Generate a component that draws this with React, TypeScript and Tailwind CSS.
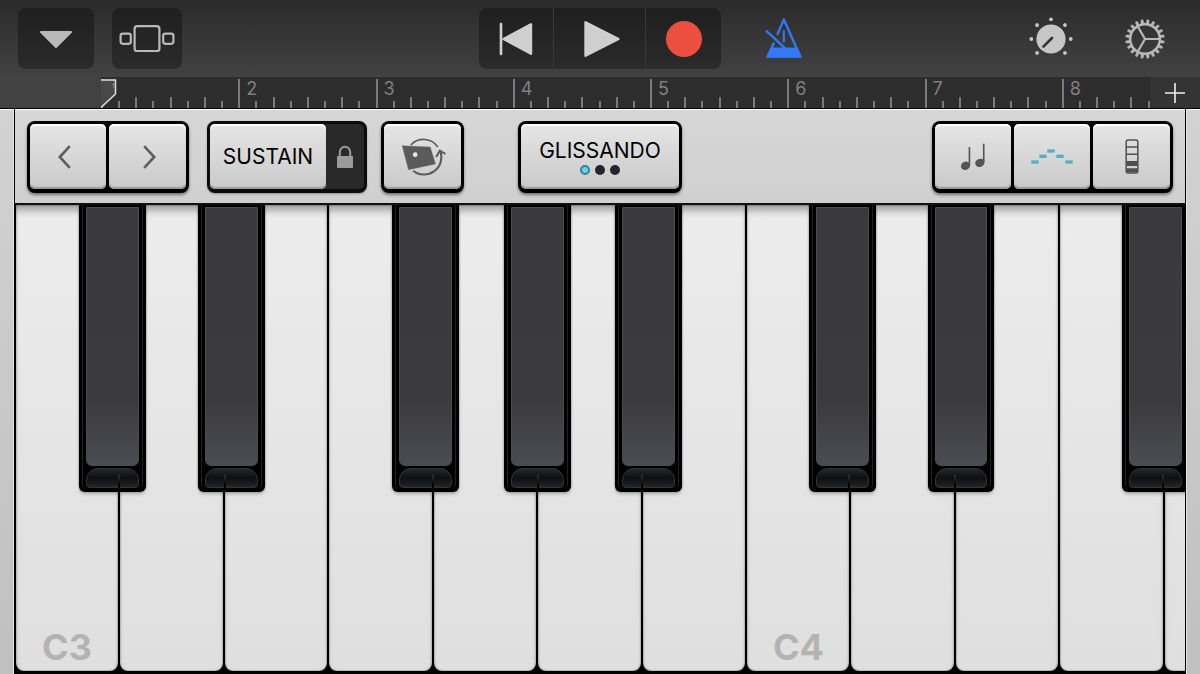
import type { ReactNode } from 'react';
import clsx from 'clsx';

const TICKS = Array.from({ length: 62 }, (_, i) => i);

const WHITE_KEYS = ['C3', 'D3', 'E3', 'F3', 'G3', 'A3', 'B3', 'C4', 'D4', 'E4', 'F4', 'G4'];

/* left edge in % of the keyboard width, split = where the gap of the white keys falls on the cap */
const BLACK_KEYS = [
  { note: 'C#3', left: 5.5, split: 61 },
  { note: 'D#3', left: 15.65, split: 35 },
  { note: 'F#3', left: 32.25, split: 63 },
  { note: 'G#3', left: 41.8, split: 49 },
  { note: 'A#3', left: 51.3, split: 36 },
  { note: 'C#4', left: 67.9, split: 61 },
  { note: 'D#4', left: 78, split: 36 },
  { note: 'F#4', left: 94.65, split: 62 },
];

const GEAR_TEETH = Array.from({ length: 20 }, (_, i) => i * 18 + 9);
const KNOB_DOTS = [-225, -180, -135, -90, -45, 0, 45];

/* ── icons ── */
function TracksIcon() {
  return (
    <svg width="56" height="28" viewBox="0 0 56 28" fill="none" stroke="#b9b9b9" strokeWidth="2.2">
      <rect x="1.6" y="8.6" width="10.2" height="10.2" rx="2.2" />
      <rect x="15.6" y="1.2" width="24.8" height="24.8" rx="2.6" />
      <rect x="44.2" y="8.6" width="10.2" height="10.2" rx="2.2" />
    </svg>
  );
}

function RewindIcon() {
  return (
    <svg width="34" height="34" viewBox="0 0 34 34" fill="#cfcfcf" stroke="#cfcfcf" strokeLinejoin="round" strokeLinecap="round">
      <path d="M2 2v30" strokeWidth="2.6" />
      <path d="M4.5 17 32 2.2v29.6z" strokeWidth="2.4" />
    </svg>
  );
}

function MetronomeIcon() {
  return (
    <svg width="38" height="41" viewBox="0 0 38 41" fill="none" stroke="#3478f6" strokeWidth="2.4" strokeLinecap="round" strokeLinejoin="round">
      <path d="M12.6 16 18.8 1.6 35.3 38.6H2.7L8.6 25.4" />
      <path d="M6.6 30.4h25.2l3.5 8.2H2.7z" fill="#3478f6" strokeWidth="2" />
      <path d="M18.8 13v10.5" strokeWidth="2.2" />
      <path d="M1.6 13.2 19.4 29.6" />
    </svg>
  );
}

function KnobIcon() {
  return (
    <svg width="44" height="44" viewBox="-22 -22 44 44">
      <circle r="14.6" fill="#c6c6c6" />
      <path d="M1 -1-7.6 7.6" stroke="#333" strokeWidth="2.6" strokeLinecap="round" />
      {KNOB_DOTS.map((deg) => (
        <circle key={deg} cx="19.7" r="1.9" fill="#c6c6c6" transform={`rotate(${deg})`} />
      ))}
    </svg>
  );
}

function GearIcon() {
  return (
    <svg width="42" height="42" viewBox="-21 -21 42 42" fill="none" stroke="#b9b9b9">
      <circle r="14.8" strokeWidth="2.4" />
      {GEAR_TEETH.map((deg) => (
        <path key={deg} d="M15.5-1.5 19.4-0.9V0.9L15.5 1.5z" fill="#b9b9b9" strokeWidth="0.5" transform={`rotate(${deg})`} />
      ))}
      <path d="M0 0H15M0 0-7.5-13M0 0-7.5 13" strokeWidth="2.2" />
    </svg>
  );
}

function ChevronIcon({ flip }: { flip?: boolean }) {
  return (
    <svg width="13" height="24" viewBox="0 0 13 24" fill="none" stroke="#5e5e5e" strokeWidth="2.6">
      <path d={flip ? 'M1.2 1.2 11.2 12 1.2 22.8' : 'M11.8 1.2 1.8 12l10 10.8'} />
    </svg>
  );
}

function LockIcon() {
  return (
    <svg width="18" height="24" viewBox="0 0 18 24" fill="none" stroke="#9b9b9b">
      <path d="M3.8 11V7.4a5.2 5.6 0 0 1 10.4 0V11" strokeWidth="2" />
      <rect x="1" y="11" width="16" height="12" rx="1" fill="#9b9b9b" stroke="none" />
    </svg>
  );
}

function TiltIcon() {
  return (
    <svg width="47" height="40" viewBox="0 0 140 120" fill="none" stroke="#5b5b5b">
      <path d="M35 24A52 52 0 0 1 116 30" strokeWidth="5" />
      <path d="M124 44A52 52 0 0 1 42 101" strokeWidth="6" />
      <path d="M111 60 122 41 139 51" strokeWidth="6" />
      <path d="M9 26 93 30 109 81 28 98z" fill="#5b5b5b" />
      <circle cx="48" cy="53" r="7" fill="#e8e8e8" stroke="none" />
    </svg>
  );
}

function NotesIcon() {
  return (
    <svg width="26" height="28" viewBox="0 0 80 86" fill="#555" stroke="#555" strokeWidth="5">
      <ellipse cx="17" cy="70" rx="12" ry="10" transform="rotate(-25 17 70)" />
      <path d="M29 68V12" />
      <ellipse cx="61" cy="61" rx="12" ry="10" transform="rotate(-25 61 61)" />
      <path d="M73 60V2" />
    </svg>
  );
}

function ArpIcon() {
  return (
    <svg width="42" height="15" viewBox="0 0 126 45" fill="#55adc6">
      <rect x="1" y="34" width="22" height="10" />
      <rect x="25" y="17" width="22" height="10" />
      <rect x="49" y="1" width="22" height="10" />
      <rect x="76" y="17" width="22" height="10" />
      <rect x="103" y="34" width="22" height="10" />
    </svg>
  );
}

function KeysIcon() {
  return (
    <svg width="14" height="35" viewBox="0 0 42 105" fill="none" stroke="#4f4f4f" strokeWidth="4.5">
      <rect x="3.5" y="3" width="35" height="99" rx="6" />
      <path d="M3 24h36M3 46h36" />
      <path d="M3 66h36v15H3zM3 88h36v12H3z" fill="#4f4f4f" stroke="none" />
    </svg>
  );
}

/* ── hardware style buttons ── */
function PadGroup({ children, className }: { children: ReactNode; className?: string }) {
  return (
    <div className={clsx('flex h-[72px] gap-[3px] rounded-lg bg-black px-[3px] pt-[3px] pb-1 shadow-[0_2px_3px_rgba(0,0,0,0.45)]', className)}>
      {children}
    </div>
  );
}

function Pad({ children, label, className }: { children: ReactNode; label?: string; className?: string }) {
  return (
    <button
      type="button"
      aria-label={label}
      className={clsx(
        'flex items-center justify-center rounded-[5px] bg-linear-to-b from-[#e6e6e6] to-[#c9c9c9] text-[21px] leading-6 text-black shadow-[inset_0_2px_1px_#fff,inset_0_-2px_1px_#9a9a9a]',
        className,
      )}
    >
      {children}
    </button>
  );
}

function TransportBar() {
  return (
    <header className="grid grid-cols-[1fr_auto_1fr] items-center bg-linear-to-b from-[#2b2b2b] to-[#424242] py-2">
      <div className="flex gap-[18px] pl-[18px]">
        <button type="button" aria-label="Menu" className="flex h-[61px] w-[76px] items-center justify-center rounded-lg bg-linear-to-b from-[#1f1f1f] to-[#2b2b2b]">
          <svg width="34" height="20" viewBox="0 0 34 20" fill="#b9b9b9" stroke="#b9b9b9" strokeWidth="2" strokeLinejoin="round">
            <path d="M2 3h30L17 18z" />
          </svg>
        </button>
        <button type="button" aria-label="Browser" className="flex h-[61px] w-[70px] items-center justify-center rounded-lg bg-linear-to-b from-[#1f1f1f] to-[#2b2b2b]">
          <TracksIcon />
        </button>
      </div>

      <div className="flex h-[61px] divide-x divide-[#3a3a3a] overflow-hidden rounded-lg bg-linear-to-b from-[#1f1f1f] to-[#2b2b2b]">
        <button type="button" aria-label="Go to beginning" className="flex w-[75px] items-center justify-center">
          <RewindIcon />
        </button>
        <button type="button" aria-label="Play" className="flex w-[92px] items-center justify-center pl-1">
          <svg width="36" height="38" viewBox="0 0 36 38" fill="#cfcfcf" stroke="#cfcfcf" strokeWidth="2.4" strokeLinejoin="round">
            <path d="M1.5 2.2v33.6L34.5 19z" />
          </svg>
        </button>
        <button type="button" aria-label="Record" className="flex w-[75px] items-center justify-center">
          <span className="size-9 rounded-full bg-[#ec4f3f]" />
        </button>
      </div>

      <div className="flex items-center justify-between pr-[34px] pl-11">
        <button type="button" aria-label="Metronome"><MetronomeIcon /></button>
        <div className="flex items-center gap-[51px]">
          <button type="button" aria-label="Controls"><KnobIcon /></button>
          <button type="button" aria-label="Settings"><GearIcon /></button>
        </div>
      </div>
    </header>
  );
}

function Ruler() {
  return (
    <div className="flex h-8 border-b border-black bg-[#424242]">
      <div className="relative ml-[101px] flex flex-1 items-end justify-between bg-[#2d2d2d]">
        {TICKS.map((i) => (
          <span
            key={i}
            className={clsx('relative w-0.5 bg-[#7a7a7a]', i % 8 === 0 ? 'h-[29px]' : i % 2 === 0 ? 'h-[11px]' : 'h-[7px]')}
          >
            {i > 0 && i % 8 === 0 && (
              <span className="absolute top-0 left-2 text-[18px] leading-5 text-[#808080]">{i / 8 + 1}</span>
            )}
          </span>
        ))}
        {/* playhead */}
        <svg className="absolute bottom-0 left-0" width="16" height="30" viewBox="0 0 16 30">
          <path d="M0 2h14.5v14L0 29.5z" fill="#484848" />
          <path d="M0 2h14.5v14L0 29.5" fill="none" stroke="#e0e0e0" strokeWidth="1.5" />
          <path d="m10.5 7 2-1.6V10" fill="none" stroke="#7a7a7a" />
        </svg>
      </div>
      <button type="button" aria-label="Add section" className="flex w-[50px] items-center justify-center bg-[#343434]">
        <svg width="20" height="20" viewBox="0 0 20 20" stroke="#f0f0f0" strokeWidth="1.6">
          <path d="M10 0v20M0 10h20" />
        </svg>
      </button>
    </div>
  );
}

function Toolbar() {
  return (
    <div className="grid grid-cols-[1fr_auto_1fr] items-start border-t border-b-2 border-t-white border-b-[#111] bg-linear-to-b from-[#d6d6d6] to-[#d0d0d0] px-3 pt-[11px] pb-2.5">
      <div className="flex">
        <PadGroup>
          <Pad label="Octave down" className="w-[76px] pr-2"><ChevronIcon /></Pad>
          <Pad label="Octave up" className="w-[77px] pl-1"><ChevronIcon flip /></Pad>
        </PadGroup>
        <div className="ml-[18px] flex h-[72px] rounded-lg border-[3px] border-b-4 border-[#0c0c0c] bg-[#292929] shadow-[0_1px_2px_rgba(0,0,0,0.3)]">
          <Pad className="w-[116px]">SUSTAIN</Pad>
          <button type="button" aria-label="Lock sustain" className="flex w-[38px] items-center justify-center">
            <LockIcon />
          </button>
        </div>
        <PadGroup className="ml-3.5">
          <Pad label="Tilt control" className="w-[77px]"><TiltIcon /></Pad>
        </PadGroup>
      </div>

      <PadGroup>
        <Pad className="w-[158px] flex-col gap-0.5">
          <span>GLISSANDO</span>
          <span className="flex gap-[5px]">
            <i className="size-2.5 rounded-full border-2 border-[#397f96] bg-[#6fd0ec]" />
            <i className="size-2.5 rounded-full bg-[#24242b]" />
            <i className="size-2.5 rounded-full bg-[#24242b]" />
          </span>
        </Pad>
      </PadGroup>

      <div className="flex justify-end">
        <PadGroup>
          <Pad label="Scale" className="w-[76px]"><NotesIcon /></Pad>
          <Pad label="Arpeggiator" className="w-[76px]"><ArpIcon /></Pad>
          <Pad label="Keyboard size" className="w-[77px]"><KeysIcon /></Pad>
        </PadGroup>
      </div>
    </div>
  );
}

function BlackKey({ note, left, split }: { note: string; left: number; split: number }) {
  return (
    <button
      type="button"
      aria-label={note}
      className="absolute top-0 flex h-[61.2%] w-[5.7%] flex-col rounded-b-md bg-black px-[3px] pb-1 shadow-[0_3px_3px_rgba(0,0,0,0.15),0_0_2px_rgba(0,0,0,0.5)]"
      style={{ left: `${left}%` }}
    >
      <span className="flex w-full flex-1 flex-col gap-0.5 rounded-b-sm border-x border-[#222] px-[3px] pt-0.5">
        <span className="w-full flex-1 rounded-b-md border border-[#4c4c4e] bg-linear-to-b from-[#3a3a3c] from-0% via-[#3b3b3d] via-75% to-[#4b4c53]" />
        <span className="relative h-5 w-full rounded-t-xl rounded-b-sm border border-[#333] bg-linear-to-b from-[#25272a] via-[#0e0f11] to-[#232527]">
          <span className="absolute -bottom-1 h-4 w-0.5 bg-linear-to-b from-[#333] to-black" style={{ left: `${split}%` }} />
        </span>
      </span>
    </button>
  );
}

function Keyboard() {
  return (
    <div className="relative flex flex-1 overflow-hidden bg-black">
      {WHITE_KEYS.map((note) => (
        <button
          key={note}
          type="button"
          aria-label={note}
          className="flex w-[8.925%] shrink-0 pr-px pb-[3px] pl-px"
        >
          <span className="flex h-full w-full items-end rounded-b-lg bg-linear-to-b from-[#ececed] to-[#dfdfe0] pb-1.5 pl-[26px] text-4xl leading-9 font-bold text-[#b3b3b4] shadow-[inset_0_10px_8px_-5px_rgba(0,0,0,0.35),inset_0_0_2px_rgba(0,0,0,0.6)]">
            {note.startsWith('C') && note}
          </span>
        </button>
      ))}
      {BLACK_KEYS.map((k) => (
        <BlackKey key={k.note} {...k} />
      ))}
    </div>
  );
}

export default function App() {
  return (
    <div className="flex min-h-screen flex-col bg-[#cacaca] font-['Inter','Liberation_Sans',sans-serif]">
      <TransportBar />
      <Ruler />
      <div className="flex flex-1">
        <div className="w-3.5 border-t border-r border-t-white border-r-[#e4e4e4] bg-linear-to-b from-[#d2d2d2] to-[#c0c0c0]" />
        <main className="flex flex-1 flex-col border-x border-black">
          <Toolbar />
          <Keyboard />
        </main>
        <div className="w-3.5 border-t border-l border-t-white border-l-[#e4e4e4] bg-linear-to-b from-[#d2d2d2] to-[#c0c0c0]" />
      </div>
    </div>
  );
}
